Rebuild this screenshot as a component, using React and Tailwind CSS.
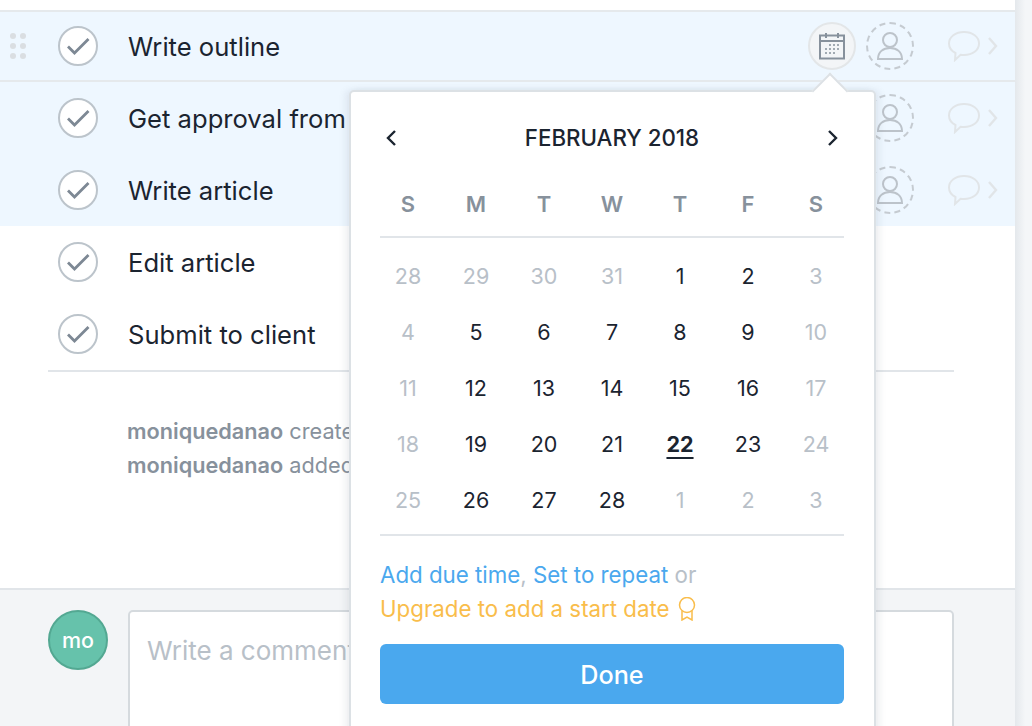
const tasks = ['Write outline', 'Get approval from', 'Write article', 'Edit article', 'Submit to client'];

const weeks = [
  [[28, 0], [29, 0], [30, 0], [31, 0], [1, 1], [2, 1], [3, 0]],
  [[4, 0], [5, 1], [6, 1], [7, 1], [8, 1], [9, 1], [10, 0]],
  [[11, 0], [12, 1], [13, 1], [14, 1], [15, 1], [16, 1], [17, 0]],
  [[18, 0], [19, 1], [20, 1], [21, 1], [22, 2], [23, 1], [24, 0]],
  [[25, 0], [26, 1], [27, 1], [28, 1], [1, 0], [2, 0], [3, 0]],
];

const CheckCircle = () => (
  <div className="flex h-10 w-10 shrink-0 items-center justify-center rounded-full border-2 border-[#bcc4cb] bg-white">
    <svg width="24" height="20" viewBox="0 0 24 20" fill="none" stroke="#7d8894" strokeWidth="2.8">
      <path d="M2 10.5l6.500 6.500L22.500 3" />
    </svg>
  </div>
);

const DragDots = () => (
  <div className="grid w-4 grid-cols-2 gap-x-1 gap-y-[4px]">
    {[0, 1, 2, 3, 4, 5].map((i) => (
      <span key={i} className="h-[6px] w-[6px] rounded-full bg-[#dadee2]" />
    ))}
  </div>
);

const CalendarIcon = () => (
  <svg width="26" height="28" viewBox="0 0 26 28" fill="none" stroke="#87919c" strokeWidth="2">
    <rect x="1" y="3.5" width="24" height="23" />
    <path d="M1 9h24M7 1v5M19 1v5" />
    <path d="M10 13h2M14 13h2M18 13h2M6 17h2M10 17h2M14 17h2M18 17h2M6 21h2M10 21h2M14 21h2" strokeWidth="1.6" />
  </svg>
);

const PersonIcon = () => (
  <svg width="26" height="28" viewBox="0 0 26 28" fill="none" stroke="#bcc3ca" strokeWidth="2">
    <circle cx="13" cy="8" r="7" />
    <path d="M1 27c0-7 5-11 12-11s12 4 12 11z" />
  </svg>
);

const DashedCircle = ({ children }) => (
  <div className="flex h-12 w-12 shrink-0 items-center justify-center rounded-full border-2 border-dashed border-[#c5cbd1]">
    {children}
  </div>
);

const CommentIcon = () => (
  <svg width="32" height="32" viewBox="0 0 32 32" fill="none" stroke="#e1e5e8" strokeWidth="2">
    <path d="M16 2c8.500 0 15 4.800 15 11.500S24.500 25 16 25c-1.200 0-2.300-.1-3.400-.3L7 30l.5-7C3.500 21 1 17.500 1 13.500 1 6.800 7.500 2 16 2z" />
  </svg>
);

const RowChevron = () => (
  <svg width="10" height="18" viewBox="0 0 10 18" fill="none" stroke="#e1e5e8" strokeWidth="2.400">
    <path d="M1 1l7 8-7 8" />
  </svg>
);

const Medal = () => (
  <svg width="18" height="24" viewBox="0 0 18 24" fill="none" stroke="#f9bd4b" strokeWidth="1.500" className="ml-2">
    <circle cx="9" cy="8" r="7.500" />
    <path d="M4 14v9l5-3 5 3v-9" />
  </svg>
);

const MonthChevron = ({ left }) => (
  <svg width="12" height="18" viewBox="0 0 12 18" fill="none" stroke="#1b2430" strokeWidth="2.400">
    <path d={left ? 'M10 2L3 9l7 7' : 'M2 2l7 7-7 7'} />
  </svg>
);

const dayColor = (kind) => {
  if (kind === 0) return 'text-[#b8c0c8]';
  if (kind === 2) return 'font-bold text-[#1b2430] underline underline-offset-[5px] decoration-2';
  return 'text-[#1b2430]';
};

const Calendar = () => (
  <div className="absolute left-[349px] top-[90px] z-10 h-[700px] w-[527px] rounded-[5px] border-2 border-[#dce1e5] bg-white pl-[29px] pr-[30px] shadow-[4px_0_6px_rgba(120,135,150,0.12),-4px_0_6px_rgba(120,135,150,0.12)]">
    <div className="absolute left-[466px] top-[-14px] h-[26px] w-[26px] rotate-45 border-l-2 border-t-2 border-[#dce1e5] bg-white" />
    <div className="flex h-[91px] items-center justify-between pl-[5px] pr-[5px]">
      <MonthChevron left />
      <span className="text-[22.300px] font-medium text-[#1b2430]">FEBRUARY 2018</span>
      <MonthChevron />
    </div>
    <div className="-mx-[6px] grid h-[53px] grid-cols-7 items-center pb-[11px] text-center text-[22px] font-semibold text-[#87919c]">
      {['S', 'M', 'T', 'W', 'T', 'F', 'S'].map((d, i) => (
        <span key={i}>{d}</span>
      ))}
    </div>
    <div className="h-[2px] bg-[#e1e5e9]" />
    <div className="-mx-[6px] grid grid-cols-7 pt-[10px] pb-[6px] text-center text-[21.500px]">
      {weeks.flat().map(([n, kind], i) => (
        <div key={i} className={`flex h-[56px] items-center justify-center ${dayColor(kind)}`}>
          {n}
        </div>
      ))}
    </div>
    <div className="h-[2px] bg-[#e1e5e9]" />
    <div className="pt-[22px] text-[22.300px] leading-[34px] text-[#b8c0c8]">
      <div>
        <span className="text-[#4aa8ee]">Add due time</span>, <span className="text-[#4aa8ee]">Set to repeat</span> or
      </div>
      <div className="flex items-center text-[#f9bd4b]">
        Upgrade to add a start date
        <Medal />
      </div>
    </div>
    <button className="mt-[18px] h-[60px] w-full rounded-[6px] bg-[#4aa8ee] pt-[3px] text-[25.200px] font-medium text-white">
      Done
    </button>
  </div>
);

const App = () => {
  return (
    <div className="relative flex h-[726px] w-[1032px] overflow-hidden bg-white font-['Inter',sans-serif]">
      <div className="flex h-full w-[1015px] shrink-0 flex-col">
        <div className="h-[10px] shrink-0" />
        <div className="h-[2px] shrink-0 bg-[#e5e9ec]" />
        {tasks.map((t, i) => (
          <div
            key={t}
            className={`flex shrink-0 items-center ${i < 3 ? 'bg-[#eef7ff]' : 'bg-white'} ${i === 0 ? 'h-[70px] border-b-2 border-[#e5e9ec]' : 'h-[72px]'}`}
          >
            <div className="flex w-[58px] shrink-0 justify-start pl-[10px]">{i === 0 && <DragDots />}</div>
            <CheckCircle />
            <span className="ml-[30px] pt-[2px] text-[25.600px] text-[#1b2430]">{t}</span>
            {i < 3 && (
              <div className="ml-auto flex items-center pr-[17px]">
                {i === 0 ? (
                  <div className="flex h-12 w-12 items-center justify-center rounded-full border-2 border-[#e3e6e8] bg-[#f3f5f7]">
                    <CalendarIcon />
                  </div>
                ) : (
                  <div className="h-12 w-12" />
                )}
                <div className="ml-[10px]">
                  <DashedCircle>
                    <PersonIcon />
                  </DashedCircle>
                </div>
                <div className="ml-[34px]">
                  <CommentIcon />
                </div>
                <div className="ml-2">
                  <RowChevron />
                </div>
              </div>
            )}
          </div>
        ))}
        <div className="ml-[48px] mr-[61px] h-[2px] shrink-0 bg-[#e1e5e9]" />
        <div className="flex-1 pl-[127px] pt-[42px] text-[21.700px] leading-[34px] text-[#87919c]">
          <div>
            <span className="font-semibold">moniquedanao</span> created
          </div>
          <div>
            <span className="font-semibold">moniquedanao</span> added
          </div>
        </div>
        <div className="flex h-[138px] shrink-0 items-start border-t-2 border-[#e1e5e9] bg-[#f3f5f7] pl-[48px] pr-[61px] pt-[20px]">
          <div className="flex h-[60px] w-[60px] shrink-0 items-center justify-center rounded-full border-2 border-[#53a892] bg-[#66c2ab] text-[21.500px] font-medium text-white">
            mo
          </div>
          <div className="ml-5 h-[200px] flex-1 rounded-[5px] border-2 border-[#d5dade] bg-white pl-[17px] pt-[19px] text-[26px] text-[#b8c0c8]">
            Write a comment
          </div>
        </div>
      </div>
      <div className="flex-1 bg-gradient-to-r from-[#e4e8ec] to-[#f4f6f8] to-60%" />
      <Calendar />
    </div>
  );
};

export default App;
